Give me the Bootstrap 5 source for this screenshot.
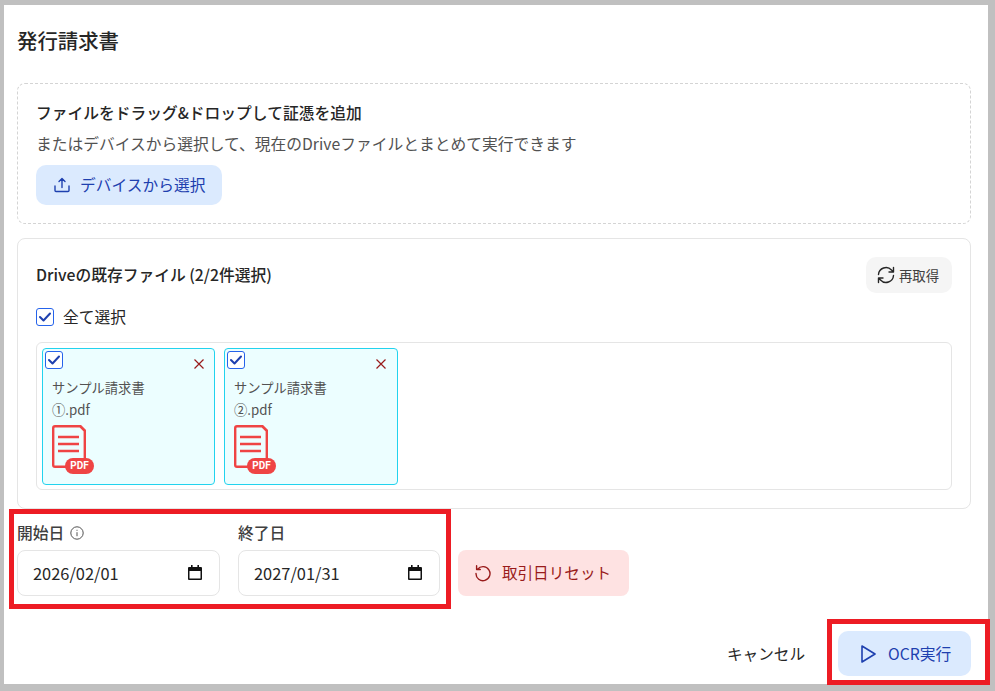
<!DOCTYPE html>
<html lang="ja">
<head>
  <meta charset="UTF-8" />
  <meta name="viewport" content="width=device-width, initial-scale=1.0"/>
  <title>発行請求書</title>
  <link href="https://cdn.jsdelivr.net/npm/bootstrap@5.3.2/dist/css/bootstrap.min.css" rel="stylesheet">
  <style>
    html, body { height: 691px; overflow: hidden; }
    body { background: #c0c0c0; font-family: "Noto Sans CJK JP", "Noto Sans", sans-serif; color: #262626; padding: 5px 7px 7px 4px; position: relative; }
    .sheet { background: #fff; height: 679px; padding: 0 17px 0 13px; }
    .sheet-title { font-size: 20.4px; font-weight: 500; line-height: 28px; padding-top: 21px; margin: 0 0 29px; color: #262626; }
    .drop-zone { height: 141px; border: 1px dashed #d4d4d4; border-radius: 8px; padding: 18px 18px; margin-bottom: 14px; }
    .drop-head { font-size: 15.75px; font-weight: 500; line-height: 22px; }
    .drop-sub { font-size: 15.75px; line-height: 22px; color: #525252; margin: 9px 0 10px; }
    .btn-soft { background: #dbeafe; color: #1e40af; border: 0; border-radius: 10px; font-size: 15.75px; font-weight: 400; display: inline-flex; align-items: center; }
    .btn-upload { height: 40px; width: 186px; padding: 0 0 0 18px; gap: 10px; }
    .files-box { height: 271px; border: 1px solid #e5e5e5; border-radius: 8px; padding: 18px 18px 0; margin-bottom: 14px; }
    .files-title { font-size: 15.75px; font-weight: 500; }
    .btn-refetch { width: 86px; height: 36px; background: #f5f5f5; border: 0; border-radius: 10px; font-size: 13.4px; color: #404040; gap: 3px; padding: 0 3px 0 0; }
    .tick { width: 18px; height: 18px; border: 1px solid #2563eb; border-radius: 3px; background: #fff; flex: none; }
    .all-row { font-size: 15.75px; line-height: 20px; margin-top: 14px; gap: 9px; height: 20px; }
    .tile-box { height: 148px; margin-top: 15px; border: 1px solid #e5e5e5; border-radius: 6px; padding: 5px; gap: 9px; }
    .tile { width: 173px; height: 137px; background: #ecfeff; border: 1px solid #22d3ee; border-radius: 4px; position: relative; padding: 28px 9px 0; }
    .tile:nth-child(2) { width: 174px; }
    .tile .tick { position: absolute; left: 2px; top: 2px; }
    .tile-x { position: absolute; right: 10px; top: 10px; }
    .tile:nth-child(2) .tile-x { right: 11px; }
    .tile-name { font-size: 13.3px; line-height: 22px; color: #525252; }
    .tile-icon { display: block; margin-top: 4px; }
    .pdf-tag { position: absolute; left: 22px; top: 109px; width: 29px; height: 16px; text-align: center; font: 700 10px/16px "Roboto", sans-serif; color: #fff; }
    .date-row { gap: 18px; }
    .date-col-a { width: 203px; }
    .date-col-b { width: 202px; }
    .date-label { font-size: 15.75px; font-weight: 500; line-height: 20px; height: 20px; margin-bottom: 7px; gap: 6px; color: #404040; }
    .date-field { height: 46px; border: 1px solid #e5e5e5; border-radius: 8px; font-size: 16.4px; padding: 0 17px 0 15px; color: #262626; }
    .btn-reset { height: 46px; width: 171px; background: #fee2e2; color: #991b1b; border: 0; border-radius: 8px; font-size: 15.6px; font-weight: 400; gap: 10px; padding: 0 2px 0 0; }
    .foot-row { margin-top: 35px; gap: 33px; }
    .btn-cancel { font-size: 15.6px; font-weight: 400; background: none; border: 0; padding: 0; color: #262626; }
    .btn-ocr { width: 133px; height: 45px; gap: 12px; padding: 0 0 0 23px; font-size: 15.75px; }
    .red-mark { position: absolute; border: 5px solid #ed1c24; pointer-events: none; }
    .mark-dates { left: 9px; top: 509px; width: 442px; height: 100px; }
    .mark-run { left: 827px; top: 619px; width: 163px; height: 66px; }
  </style>
</head>
<body>
  <div class="sheet">
    <h1 class="sheet-title">発行請求書</h1>

    <!-- Upload -->
    <div class="drop-zone">
      <div class="drop-head">ファイルをドラッグ&amp;ドロップして証憑を追加</div>
      <div class="drop-sub">またはデバイスから選択して、現在のDriveファイルとまとめて実行できます</div>
      <button type="button" class="btn-soft btn-upload">
        <svg width="16" height="16" viewBox="0 0 16 16" fill="none" stroke="#1e40af" stroke-width="1.4" stroke-linecap="round" stroke-linejoin="round"><path d="M8 10.5V1.5M5 4.5l3-3 3 3M1 9v4.5a1 1 0 0 0 1 1h12a1 1 0 0 0 1-1V9"/></svg>
        デバイスから選択
      </button>
    </div>

    <!-- Drive files -->
    <div class="files-box">
      <div class="d-flex justify-content-between align-items-center">
        <div class="files-title">Driveの既存ファイル (2/2件選択)</div>
        <button type="button" class="btn-refetch d-inline-flex align-items-center justify-content-center">
          <svg width="20" height="20" viewBox="0 0 20 20" fill="none" stroke="#262626" stroke-width="1.4" stroke-linecap="round" stroke-linejoin="round"><path d="M2.5 9.5a7.5 7.5 0 0 1 13-4.5l2 2M17.5 2.5V7H13M17.5 10.5a7.5 7.5 0 0 1-13 4.5l-2-2M2.5 17.5V13H7"/></svg>
          再取得
        </button>
      </div>
      <div class="all-row d-flex align-items-center">
        <span class="tick d-flex align-items-center justify-content-center"><svg width="12" height="10" viewBox="0 0 12 10" fill="none" stroke="#1e40af" stroke-width="2" stroke-linecap="round" stroke-linejoin="round"><path d="M1 5l3.5 3.5L11 1.5"/></svg></span>
        全て選択
      </div>
      <div class="tile-box d-flex">
        <div class="tile">
          <span class="tick d-flex align-items-center justify-content-center"><svg width="12" height="10" viewBox="0 0 12 10" fill="none" stroke="#1e40af" stroke-width="2" stroke-linecap="round" stroke-linejoin="round"><path d="M1 5l3.5 3.5L11 1.5"/></svg></span>
          <svg class="tile-x" width="10" height="10" viewBox="0 0 10 10" fill="none" stroke="#991b1b" stroke-width="1.2"><path d="M.5.5l9 9M9.5.5l-9 9"/></svg>
          <div class="tile-name">サンプル請求書<br>①.pdf</div>
          <svg class="tile-icon" width="43" height="49" viewBox="0 0 43 49"><path d="M3 1.2h25l4.8 4.8v35.8H3a1.8 1.8 0 0 1-1.8-1.8V3A1.8 1.8 0 0 1 3 1.2z" fill="none" stroke="#ef4444" stroke-width="2.4"/><path d="M27 0h2l5 5v2z" fill="#ef4444"/><path d="M6 12h21M6 19h21M6 26h21" stroke="#ef4444" stroke-width="2.5"/><rect x="13" y="33" width="29" height="16" rx="8" fill="#ef4444"/></svg>
          <span class="pdf-tag">PDF</span>
        </div>
        <div class="tile">
          <span class="tick d-flex align-items-center justify-content-center"><svg width="12" height="10" viewBox="0 0 12 10" fill="none" stroke="#1e40af" stroke-width="2" stroke-linecap="round" stroke-linejoin="round"><path d="M1 5l3.5 3.5L11 1.5"/></svg></span>
          <svg class="tile-x" width="10" height="10" viewBox="0 0 10 10" fill="none" stroke="#991b1b" stroke-width="1.2"><path d="M.5.5l9 9M9.5.5l-9 9"/></svg>
          <div class="tile-name">サンプル請求書<br>②.pdf</div>
          <svg class="tile-icon" width="43" height="49" viewBox="0 0 43 49"><path d="M3 1.2h25l4.8 4.8v35.8H3a1.8 1.8 0 0 1-1.8-1.8V3A1.8 1.8 0 0 1 3 1.2z" fill="none" stroke="#ef4444" stroke-width="2.4"/><path d="M27 0h2l5 5v2z" fill="#ef4444"/><path d="M6 12h21M6 19h21M6 26h21" stroke="#ef4444" stroke-width="2.5"/><rect x="13" y="33" width="29" height="16" rx="8" fill="#ef4444"/></svg>
          <span class="pdf-tag">PDF</span>
        </div>
      </div>
    </div>

    <!-- Dates -->
    <div class="date-row d-flex align-items-end">
      <div class="date-col-a">
        <div class="date-label d-flex align-items-center">開始日
          <svg width="14" height="14" viewBox="0 0 14 14" fill="none" stroke="#525252"><circle cx="7" cy="7" r="6.2"/><path d="M7 6.2v4M7 3.8v1"/></svg>
        </div>
        <div class="date-field d-flex align-items-center justify-content-between">2026/02/01
          <svg width="14" height="16" viewBox="0 0 14 16"><path d="M1 2h12a1 1 0 0 1 1 1v11a1 1 0 0 1-1 1H1a1 1 0 0 1-1-1V3a1 1 0 0 1 1-1zM1.5 6v7.5h11V6z" fill="#111" fill-rule="evenodd"/><path d="M3 0h1.6v2H3zM9.4 0H11v2H9.4z" fill="#111"/></svg>
        </div>
      </div>
      <div class="date-col-b">
        <div class="date-label d-flex align-items-center">終了日</div>
        <div class="date-field d-flex align-items-center justify-content-between">2027/01/31
          <svg width="14" height="16" viewBox="0 0 14 16"><path d="M1 2h12a1 1 0 0 1 1 1v11a1 1 0 0 1-1 1H1a1 1 0 0 1-1-1V3a1 1 0 0 1 1-1zM1.5 6v7.5h11V6z" fill="#111" fill-rule="evenodd"/><path d="M3 0h1.6v2H3zM9.4 0H11v2H9.4z" fill="#111"/></svg>
        </div>
      </div>
      <button type="button" class="btn-reset d-inline-flex align-items-center justify-content-center">
        <svg width="18" height="18" viewBox="0 0 18 18" fill="none" stroke="#991b1b" stroke-width="1.4" stroke-linecap="round" stroke-linejoin="round"><path d="M3.6 5.2A7 7 0 1 1 2 9.5M2.6 1.8v3.7h3.7"/></svg>
        取引日リセット
      </button>
    </div>

    <!-- Footer -->
    <div class="foot-row d-flex justify-content-end align-items-center">
      <button type="button" class="btn-cancel">キャンセル</button>
      <button type="button" class="btn-soft btn-ocr">
        <svg width="15" height="18" viewBox="0 0 15 18" fill="none" stroke="#1e40af" stroke-width="1.6" stroke-linejoin="round"><path d="M1 1l13 8-13 8z"/></svg>
        OCR実行
      </button>
    </div>
  </div>

  <div class="red-mark mark-dates"></div>
  <div class="red-mark mark-run"></div>

  <script src="https://cdn.jsdelivr.net/npm/bootstrap@5.3.2/dist/js/bootstrap.bundle.min.js"></script>
</body>
</html>
